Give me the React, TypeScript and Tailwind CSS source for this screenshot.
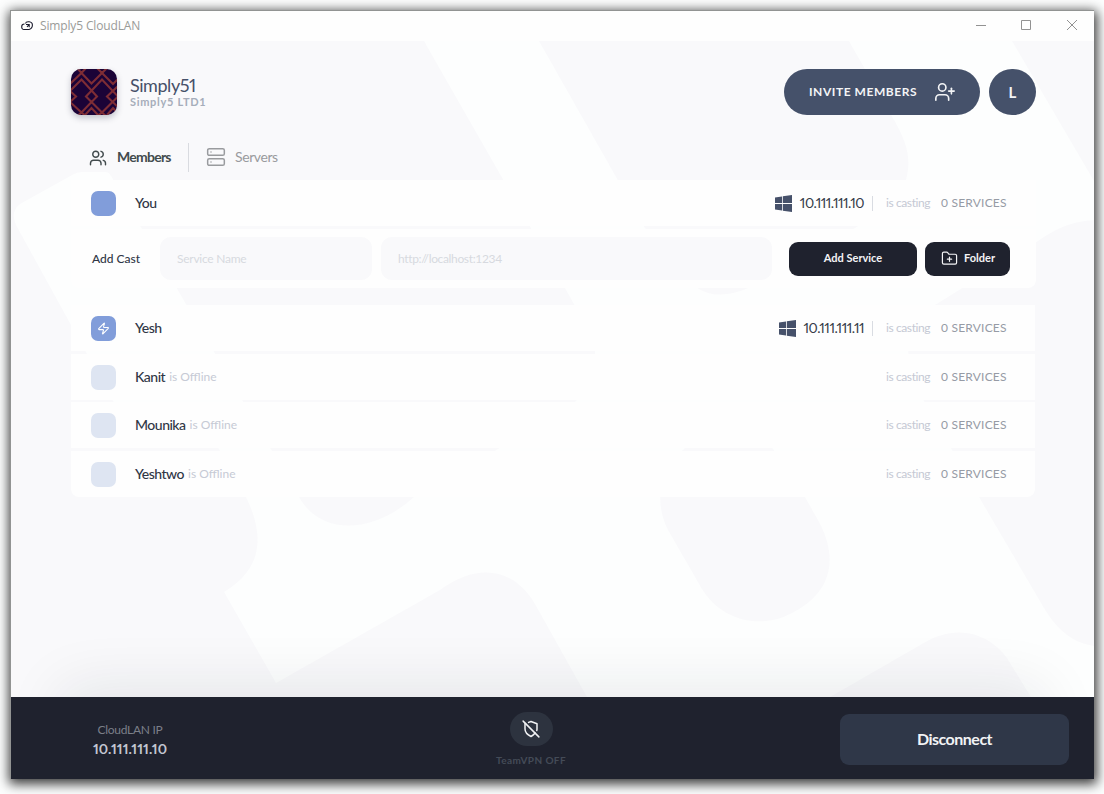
import React from "react";
import { FolderPlus, Server, UserPlus, Users, Zap } from "lucide-react";

function Backdrop() {
  return (
    <svg className="absolute inset-0 h-full w-full" viewBox="11 41 1083 656" preserveAspectRatio="none" fill="#f9f9fb">
      <path d="M11 41H424L565 288L594 340Q600 382 576 401L498 449L414 497C376 532 322 538 299 497L111 176Q109 172 105 172H82Q78 172 74 174L20 204Q10 212 16 225L71 325L113 401C136 440 185 402 219 449L246 497C264 534 264 568 224 592L276 683L440 590C480 561 515 570 535 604L587 697H11Z" />
      <path d="M539 41H849L891 115C909 144 911 161 906 180Q899 200 884 211L855 228L748 288C729 297 705 298 692 283L645 228Z" />
      <path d="M684 449C711 424 755 421 773 449L805 497L819 522C842 565 825 596 794 612C760 631 721 620 702 589L668 530C660 514 650 478 684 449Z" />
      <path d="M1012 41H1094V181Z" />
      <path d="M1094 220C1068 222 1056 229 1035 243L935 305C904 319 899 354 924 401L979 497L1044 608C1059 633 1075 643 1094 646Z" />
      <path d="M830 697L922 644C957 623 988 633 1007 658L1031 697Z" />
    </svg>
  );
}

function CloudMark() {
  return (
    <svg className="h-[10px] w-[12px] shrink-0" viewBox="0 0 12 10" fill="none" stroke="#17172b" strokeWidth="1.1">
      <path d="M4.500 2.500C5-.1 11.400 0 11.400 4C11.400 6.500 10 8 8 8.500H3C1.500 8.500.7 7.500.7 5.700S1.900 3 3.500 3" />
      <path d="M5 3.500H8.200V6.200M8 3.700L6 6" />
    </svg>
  );
}

function TeamLogo() {
  return (
    <svg className="h-[46px] w-[46px] shrink-0 rounded-[10px] shadow-[0_3px_6px_rgba(30,35,60,.25)]" viewBox="0 0 46 46">
      <rect width="46" height="46" fill="#1b0337" />
      <g fill="none" stroke="#7e2d35" strokeWidth="2.1">
        <path d="M-1 15L10.500 4L20.500 14.500L31 4L42 15L52 5" />
        <path d="M-1 22L10.500 10.500L26 27.500L20.500 33L15 27.500L31 10.500L47 27.500" />
        <path d="M5 -2L10.500 4L16 -2M25 -2L31 4L37 -2" />
        <path d="M-1 22L5 27.500L-1 33L10.500 43.500L20.500 33L31 43.500L47 27.500M47 17L36 27.500L48 39" />
        <path d="M5 48L10.500 43.500L16 48M14 46L20.500 39L27 46M25 48L31 43.500L36 48M36 46L42 39L48 45" />
      </g>
    </svg>
  );
}

function WindowsMark() {
  return (
    <svg className="h-[17px] w-[17px] shrink-0" viewBox="0 0 17 17" fill="#46516a">
      <path d="M0 2.400L7 1.400V8H0ZM7.800 1.300L17 0V8H7.800ZM0 8.900H7V15.600L0 14.600ZM7.800 8.900H17V17L7.800 15.700Z" />
    </svg>
  );
}

function ShieldOff() {
  return (
    <svg className="h-[18px] w-[18px]" viewBox="0 0 24 24" fill="none" stroke="#f1f2f4" strokeWidth="2" strokeLinecap="round" strokeLinejoin="round">
      <path d="M19.700 14A6.900 6.900 0 0 0 20 12V5L12 2L8.800 3.200" />
      <path d="M4.700 4.700L4 5V12C4 18 12 22 12 22A20.300 20.300 0 0 0 17.600 17.400" />
      <path d="M1.500 1.500L22.500 22.500" />
    </svg>
  );
}

type MemberProps = { name: string; ip?: string; offline?: boolean; zap?: boolean; className: string };

function Member({ name, ip, offline, zap, className }: MemberProps) {
  return (
    <div className={"flex items-center bg-[#fefefe] pl-5 pr-[29px] " + className}>
      <div className={"flex h-[25px] w-[25px] items-center justify-center rounded-[7px] " + (offline ? "bg-[#dee5f2]" : "bg-[#819dda]")}>
        {zap && <Zap className="h-[13px] w-[13px] text-white" strokeWidth={2} />}
      </div>
      <span className="relative -top-px ml-[19px] text-[14px] font-medium tracking-[-0.5px] text-[#303746]">{name}</span>
      {offline && <span className="ml-1 text-[12px] text-[#c6cad5]">is Offline</span>}
      <div className="ml-auto flex items-center">
        {ip && (
          <>
            <WindowsMark />
            <span className="relative -top-px ml-2 text-[14px] proportional-nums tracking-[-0.5px] text-[#353c49]">{ip}</span>
            <span className="ml-2 h-[15px] w-px bg-[#d9dce2]" />
          </>
        )}
        <span className="ml-[13px] w-[45px] whitespace-nowrap text-[12px] tracking-[-0.4px] text-[#c5c9d4]">is casting</span>
        <span className="ml-[10px] w-[66px] whitespace-nowrap text-[12px] tracking-[0.2px] text-[#969ba5]">0 SERVICES</span>
      </div>
    </div>
  );
}

export default function App() {
  return (
    <div className="h-[794px] w-[1104px] overflow-hidden bg-[#fdfefe] pl-[10px] pt-[10px] font-['Lato',sans-serif]">
      <div className="flex h-[769px] w-[1084px] flex-col border-l border-t border-[#929493] bg-white shadow-[1px_3px_11px_2px_rgba(0,0,0,.78)]">
        <header className="flex h-[30px] shrink-0 items-center bg-[#fefefe] pl-[10px]">
          <CloudMark />
          <span className="ml-[7px] font-['Open_Sans',sans-serif] text-[12px] tracking-[-0.15px] text-[#9a9b98]">Simply5 CloudLAN</span>
          <svg className="mb-[2px] ml-auto mr-[16px] h-[12px] w-[103px]" viewBox="0 0 103 12" fill="none" stroke="#929292">
            <path d="M1 6.500H11M46.500 1.500H55.500V10.500H46.500ZM92 1L102 11M102 1L92 11" />
          </svg>
        </header>

        <main className="relative h-[656px] shrink-0 overflow-hidden bg-[#fdfefe]">
          <Backdrop />
          <div className="relative pl-[60px] pr-[58px] pt-[28px]">
            <div className="flex items-center">
              <TeamLogo />
              <div className="ml-[13px] flex flex-col">
                <span className="text-[18px] leading-[18px] proportional-nums tracking-[-0.45px] text-[#465069]">Simply51</span>
                <span className="mt-[1px] text-[11px] font-bold leading-[14px] tracking-[0.7px] text-[#a6adba]">Simply5 LTD1</span>
              </div>
              <button className="ml-auto flex h-[46px] w-[196px] items-center rounded-full bg-[#45516a] pl-[25px] text-[12px] font-bold tracking-[0.55px] text-[#f3f4f6]">
                <span className="w-[125px] whitespace-nowrap text-left">INVITE MEMBERS</span>
                <UserPlus className="h-[22px] w-[22px]" strokeWidth={1.8} />
              </button>
              <button className="ml-[9px] h-[46px] w-[47px] rounded-full bg-[#45516a] text-[15px] font-bold text-[#f3f4f6]">L</button>
            </div>

            <nav className="mt-[28px] flex h-[29px] items-center text-[14px]">
              <Users className="ml-[18px] h-[18px] w-[18px] text-[#424b4d]" strokeWidth={1.9} />
              <span className="relative -top-px ml-[10px] w-[71px] font-bold tracking-[-0.75px] text-[#424b4d]">Members</span>
              <span className="h-[29px] w-px bg-[#d9dbe0]" />
              <Server className="relative -top-px ml-[17px] h-[20px] w-[20px] text-[#999b9e]" strokeWidth={1.8} />
              <span className="relative -top-px ml-[9px] tracking-[-0.4px] text-[#999b9e]">Servers</span>
            </nav>

            <section className="mt-[8px] h-[108px]">
              <Member name="You" ip="10.111.111.10" className="h-[46px]" />
              <div className="mt-[3px] flex h-[59px] items-center rounded-b-lg bg-[#fefefe] pl-[21px]">
                <span className="w-[68px] text-[12px] font-medium text-[#303746]">Add Cast</span>
                <input className="h-[43px] w-[212px] rounded-[11px] bg-[#f9f9fb] px-[17px] text-[12px] tracking-[-0.25px] placeholder:text-[#d7d9df]" placeholder="Service Name" />
                <input className="ml-[9px] h-[43px] w-[391px] rounded-[11px] bg-[#f9f9fb] px-[17px] text-[12px] tracking-[-0.35px] placeholder:text-[#d7d9df]" placeholder="http://localhost:1234" />
                <button className="ml-[17px] h-[34px] w-[128px] rounded-[9px] bg-[#1f222e] text-[11px] font-bold text-[#f4f4f6]">Add Service</button>
                <button className="ml-2 flex h-[34px] w-[85px] items-center rounded-[9px] bg-[#1f222e] pl-[16px] text-[11px] font-bold text-[#f4f4f6]">
                  <FolderPlus className="mr-[6px] h-[17px] w-[17px]" strokeWidth={1.7} />
                  Folder
                </button>
              </div>
            </section>

            <section className="mr-px mt-[17px] flex flex-col [&>div]:pr-[28px]">
              <Member name="Yesh" ip="10.111.111.11" zap className="h-[46px]" />
              <Member name="Kanit" offline className="mt-[3px] h-[46px]" />
              <Member name="Mounika" offline className="mt-[2px] h-[46px]" />
              <Member name="Yeshtwo" offline className="mt-[3px] h-[46px] rounded-b-lg" />
            </section>
          </div>
          <div className="absolute left-[60px] top-[661px] h-[82px] w-[963px] shadow-[0_-5px_60px_10px_rgba(25,30,45,.09)]" />
        </main>

        <footer className="flex h-[82px] shrink-0 items-center bg-[#1f222e]">
          <div className="ml-[69px] mt-[4px] flex w-[100px] flex-col items-center">
            <span className="text-[12px] leading-[16px] tracking-[-0.3px] text-[#7b7f88]">CloudLAN IP</span>
            <span className="mt-[2px] text-[14px] font-bold leading-[18px] proportional-nums tracking-[0.1px] text-[#c2c6d1]">10.111.111.10</span>
          </div>
          <div className="ml-[301px] mt-[2px] flex w-[100px] flex-col items-center pt-[1px]">
            <div className="flex h-[34px] w-[43px] items-center justify-center rounded-[17px] bg-[#2d333f]">
              <ShieldOff />
            </div>
            <span className="mt-[8px] text-[10px] font-bold leading-[13px] tracking-[0.4px] text-[#444b57]">TeamVPN OFF</span>
          </div>
          <button className="ml-auto mr-[25px] mt-[2px] h-[51px] w-[229px] rounded-[9px] bg-[#2f3748] text-[16px] font-bold tracking-[-0.5px] text-[#f2f3f5]">Disconnect</button>
        </footer>
      </div>
    </div>
  );
}
